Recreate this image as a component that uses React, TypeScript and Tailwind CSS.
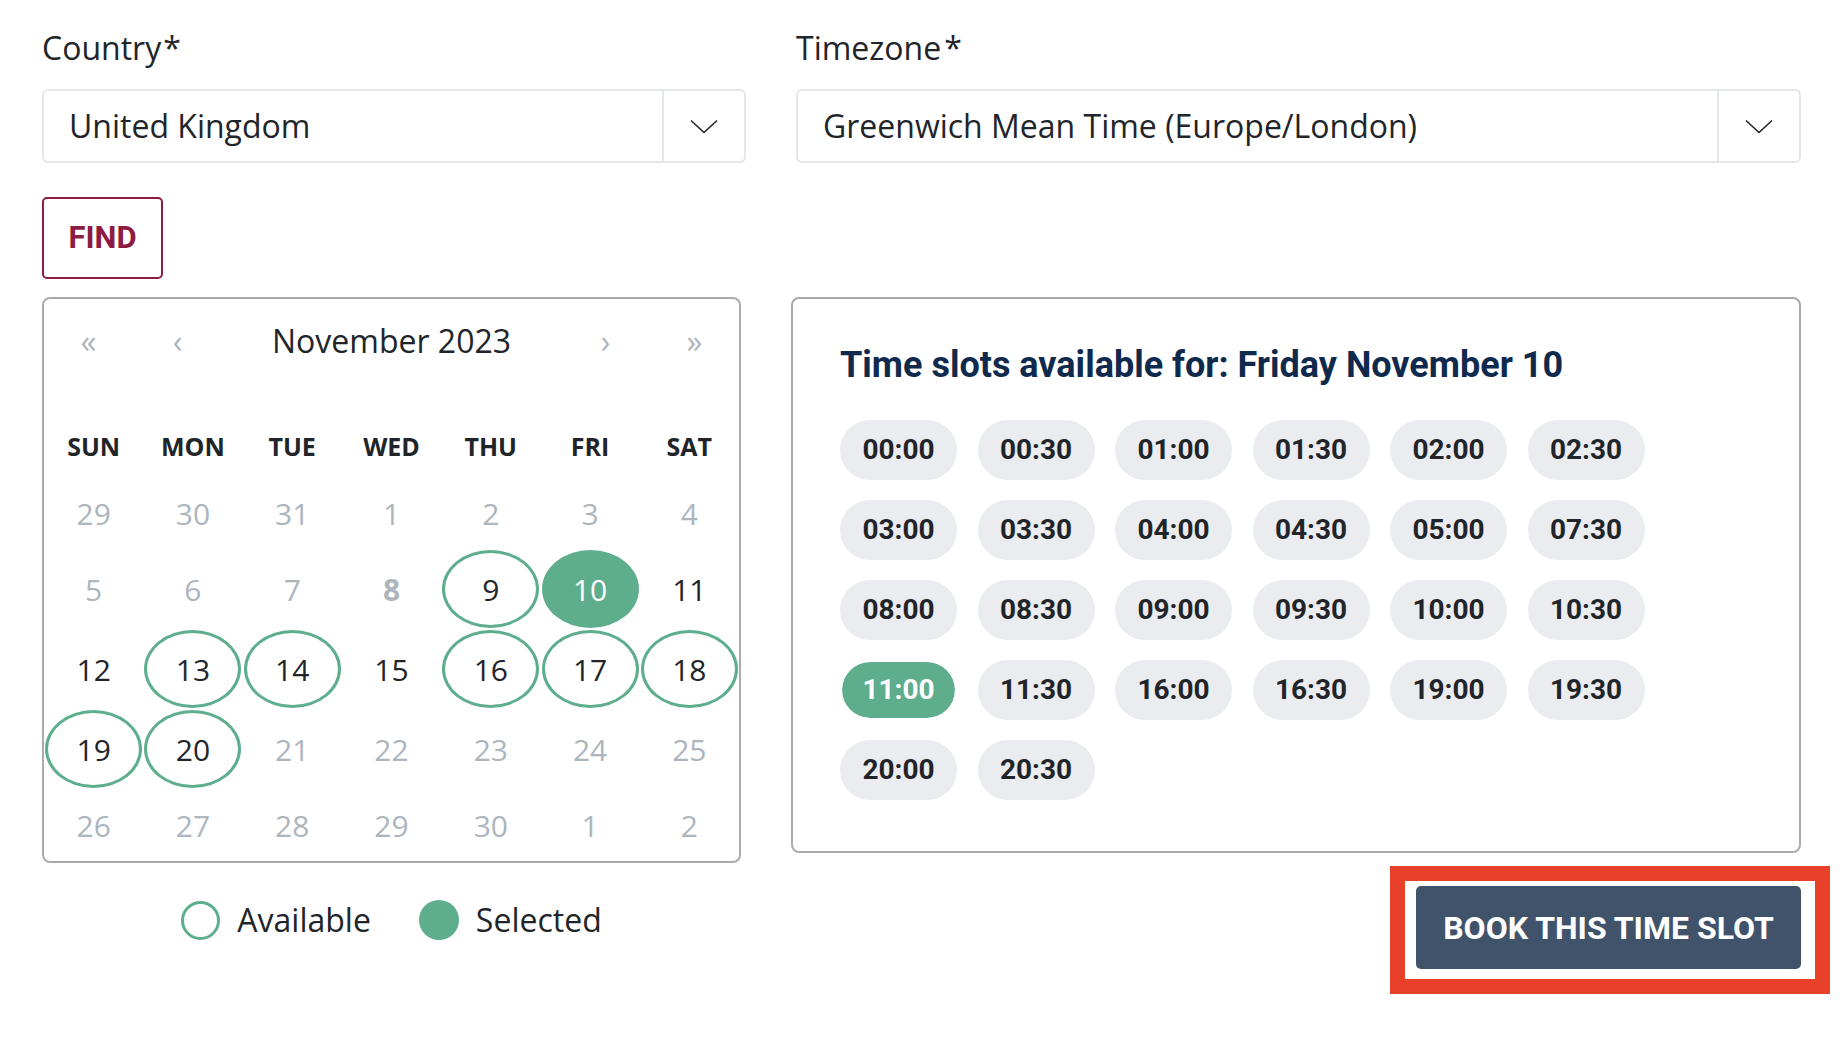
import React from "react";

type DayKind = "muted" | "today" | "plain" | "available" | "selected";

const weekdays = ["SUN", "MON", "TUE", "WED", "THU", "FRI", "SAT"];

// first and last weeks have no circles, so they sit a little tighter
const weeks: { row: string; days: [number, DayKind][] }[] = [
  {
    row: "h-[72px]",
    days: [
      [29, "muted"],
      [30, "muted"],
      [31, "muted"],
      [1, "muted"],
      [2, "muted"],
      [3, "muted"],
      [4, "muted"],
    ],
  },
  {
    row: "h-[80px]",
    days: [
      [5, "muted"],
      [6, "muted"],
      [7, "muted"],
      [8, "today"],
      [9, "available"],
      [10, "selected"],
      [11, "plain"],
    ],
  },
  {
    row: "h-[80px]",
    days: [
      [12, "plain"],
      [13, "available"],
      [14, "available"],
      [15, "plain"],
      [16, "available"],
      [17, "available"],
      [18, "available"],
    ],
  },
  {
    row: "h-[80px]",
    days: [
      [19, "available"],
      [20, "available"],
      [21, "muted"],
      [22, "muted"],
      [23, "muted"],
      [24, "muted"],
      [25, "muted"],
    ],
  },
  {
    row: "h-[72px]",
    days: [
      [26, "muted"],
      [27, "muted"],
      [28, "muted"],
      [29, "muted"],
      [30, "muted"],
      [1, "muted"],
      [2, "muted"],
    ],
  },
];

const slots = [
  "00:00", "00:30", "01:00", "01:30", "02:00", "02:30",
  "03:00", "03:30", "04:00", "04:30", "05:00", "07:30",
  "08:00", "08:30", "09:00", "09:30", "10:00", "10:30",
  "11:00", "11:30", "16:00", "16:30", "19:00", "19:30",
  "20:00", "20:30",
];

function Chevron() {
  return (
    <svg width="28" height="15" viewBox="0 0 28 15" fill="none">
      <polyline points="1,1.5 14,13.5 27,1.5" stroke="#212529" strokeWidth="1.6" />
    </svg>
  );
}

function SelectBox({ value }: { value: string }) {
  return (
    <div className="flex h-[74px] items-stretch rounded-[6px] border-2 border-[#e3e6ea] bg-white">
      <div className="flex flex-1 items-center pl-[25px] text-[32px] text-[#212529]">{value}</div>
      <div className="flex w-[82px] items-center justify-center border-l-2 border-[#e3e6ea]">
        <Chevron />
      </div>
    </div>
  );
}

function Day({ n, kind }: { n: number; kind: DayKind }) {
  const circle = "flex h-[78px] w-[97px] items-center justify-center rounded-[50%] text-[30px]";
  const flat = "flex h-[64px] w-[97px] items-center justify-center text-[30px]";
  if (kind === "selected")
    return <div className={`${circle} bg-[#5eae8e] text-white`}>{n}</div>;
  if (kind === "available")
    return <div className={`${circle} border-[3px] border-[#5eae8e] text-[#212529]`}>{n}</div>;
  if (kind === "today")
    return <div className={`${flat} font-bold text-[#adb5bd]`}>{n}</div>;
  if (kind === "plain")
    return <div className={`${flat} text-[#212529]`}>{n}</div>;
  return <div className={`${flat} text-[#adb5bd]`}>{n}</div>;
}

function Calendar() {
  return (
    <div className="rounded-[8px] border-2 border-[#ababab]">
      <div className="flex h-[84px] items-center">
        <div className="flex w-[89px] justify-center text-[32px] text-[#adb5bd]">«</div>
        <div className="flex w-[89px] justify-center text-[32px] text-[#adb5bd]">‹</div>
        <div className="flex flex-1 justify-center text-[32px] text-[#212529]">November 2023</div>
        <div className="flex w-[89px] justify-center text-[32px] text-[#adb5bd]">›</div>
        <div className="flex w-[89px] justify-center text-[32px] text-[#adb5bd]">»</div>
      </div>
      <div className="mt-[44px] grid h-[40px] grid-cols-7 items-center">
        {weekdays.map((d) => (
          <div key={d} className="text-center text-[25px] font-bold text-[#212529]">
            {d}
          </div>
        ))}
      </div>
      <div className="mt-[10px]">
        {weeks.map((w, i) => (
          <div key={i} className={`grid grid-cols-7 items-center ${w.row}`}>
            {w.days.map(([n, kind], j) => (
              <div key={j} className="flex justify-center">
                <Day n={n} kind={kind} />
              </div>
            ))}
          </div>
        ))}
      </div>
    </div>
  );
}

export default function App() {
  return (
    <div className="relative h-[1052px] w-[1842px] overflow-hidden bg-white font-['Open_Sans',sans-serif] text-[#212529]">
      <div className="flex pl-[42px] pt-[26px]">
        <div className="w-[704px]">
          <div className="h-[44px] text-[32px] leading-[44px]">
            Country<span className="ml-[2px]">*</span>
          </div>
          <div className="mt-[19px]">
            <SelectBox value="United Kingdom" />
          </div>
          <button className="mt-[34px] flex h-[82px] w-[121px] items-center justify-center rounded-[5px] border-2 border-[#8c1c43] font-['Roboto',sans-serif] text-[31px] font-bold text-[#8c1c43]">
            FIND
          </button>
          <div className="mt-[18px] w-[699px]">
            <Calendar />
            <div className="mt-[37px] flex h-[40px] items-center justify-center text-[32px]">
              <div className="h-[39px] w-[39px] rounded-full border-[3px] border-[#5eae8e]" />
              <span className="ml-[17px]">Available</span>
              <div className="ml-[48px] h-[40px] w-[40px] rounded-full bg-[#5eae8e]" />
              <span className="ml-[17px]">Selected</span>
            </div>
          </div>
        </div>

        <div className="ml-[45px] w-[1010px]">
          <div className="ml-[5px] h-[44px] text-[32px] leading-[44px]">
            Timezone<span className="ml-[3px]">*</span>
          </div>
          <div className="ml-[5px] mt-[19px]">
            <SelectBox value="Greenwich Mean Time (Europe/London)" />
          </div>
          <div className="mt-[134px] h-[556px] rounded-[8px] border-2 border-[#ababab] pl-[47px] pt-[45px]">
            <h2 className="font-['Roboto',sans-serif] text-[36px] leading-[43px] font-bold text-[#0f2a4d]">
              Time slots available for: Friday November 10
            </h2>
            <div className="mt-[33px] flex w-[830px] flex-wrap gap-x-[20.5px] gap-y-[20px]">
              {slots.map((s) => (
                <div
                  key={s}
                  className={
                    s === "11:00"
                      ? "flex h-[60px] w-[117px] items-center justify-center rounded-full border-2 border-white bg-[#5eae8e] bg-clip-padding font-['Roboto',sans-serif] text-[28px] font-bold text-white"
                      : "flex h-[60px] w-[117px] items-center justify-center rounded-full bg-[#ebecf0] font-['Roboto',sans-serif] text-[28px] font-bold text-[#212529]"
                  }
                >
                  {s}
                </div>
              ))}
            </div>
          </div>
          <div className="mt-[33px] flex justify-end">
            <div className="relative">
              <button className="flex h-[83px] w-[385px] items-center justify-center rounded-[5px] bg-[#41536b] font-['Roboto',sans-serif] text-[32px] font-bold text-white">
                BOOK THIS TIME SLOT
              </button>
              <div className="pointer-events-none absolute -bottom-[25px] -left-[26px] -right-[29px] -top-[20px] border-[15px] border-[#e9402a]" />
            </div>
          </div>
        </div>
      </div>
    </div>
  );
}
